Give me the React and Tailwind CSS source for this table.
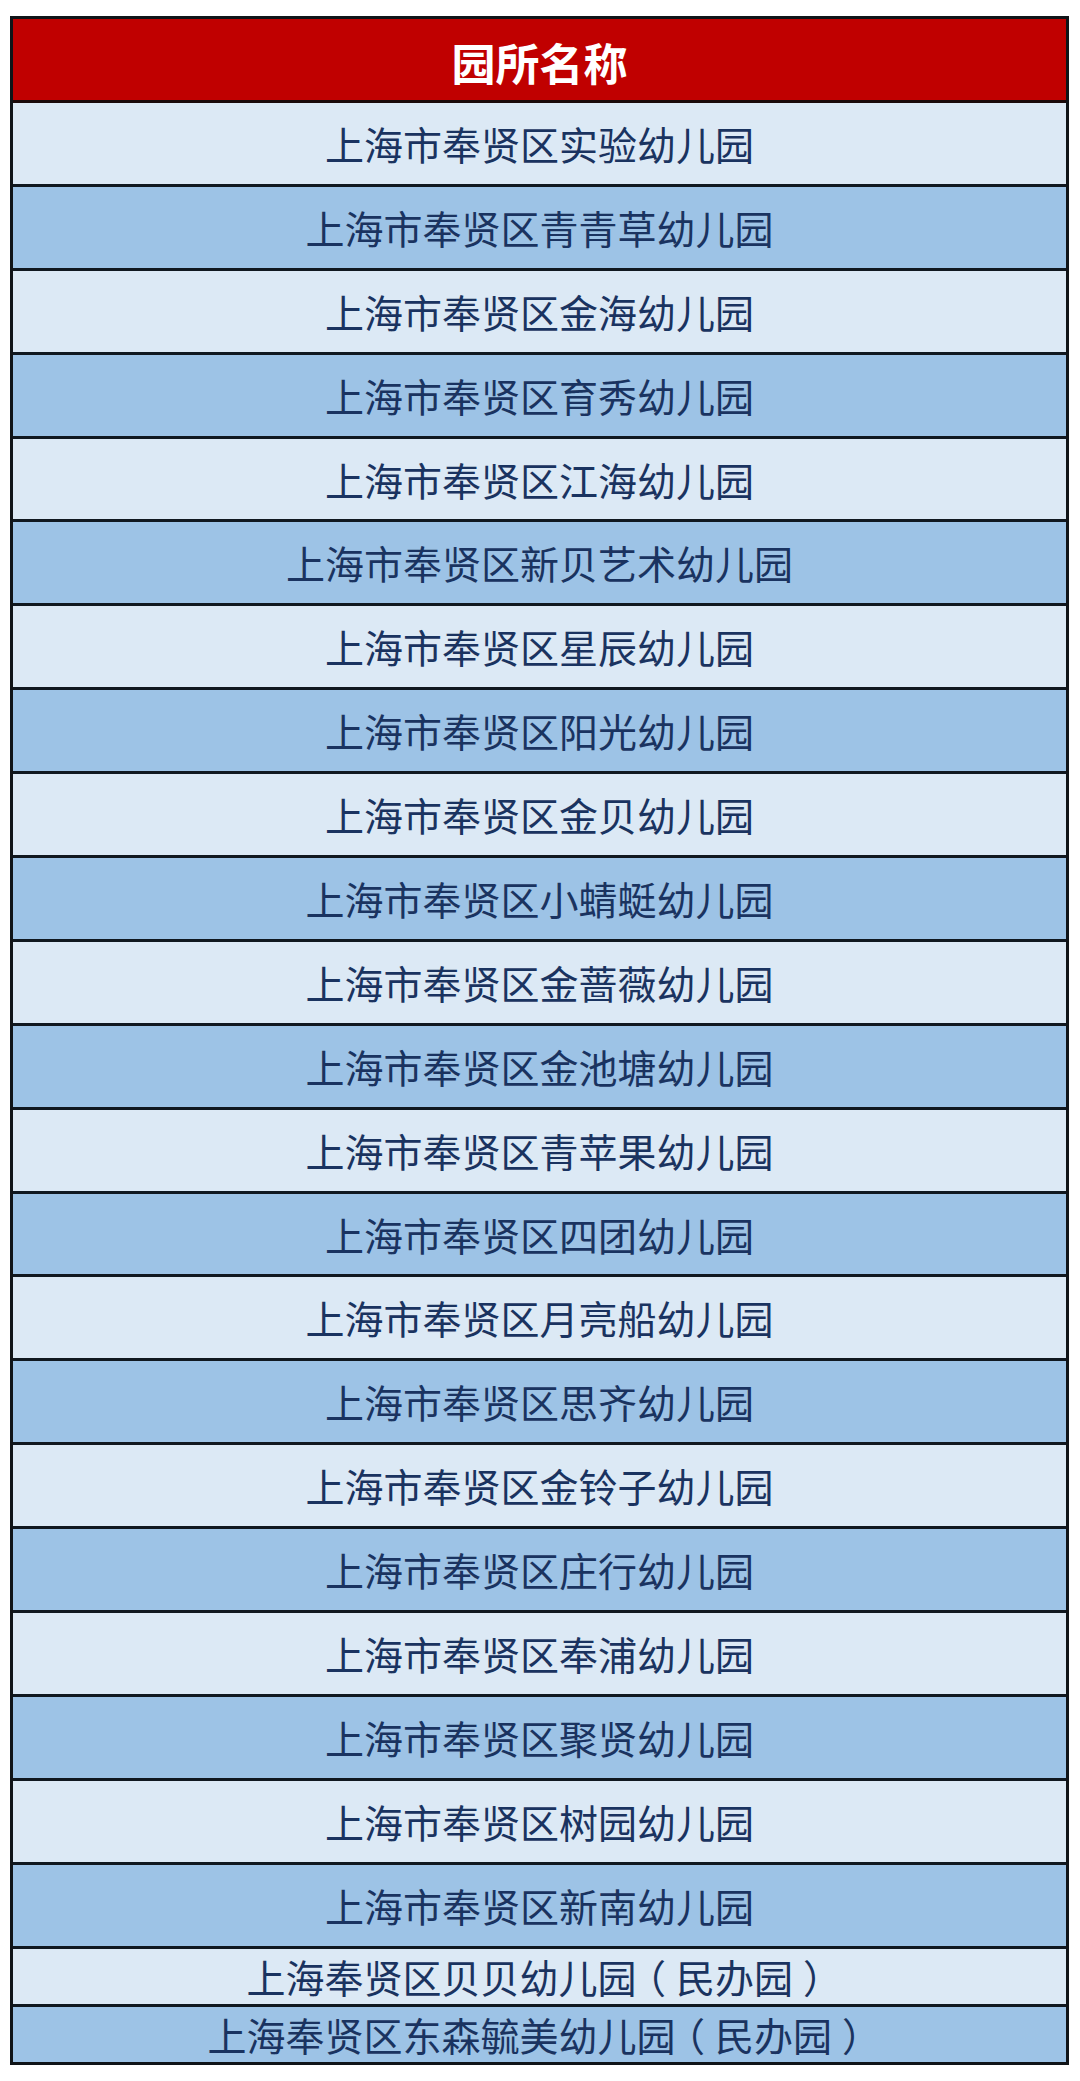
const names = [
  '上海市奉贤区实验幼儿园',
  '上海市奉贤区青青草幼儿园',
  '上海市奉贤区金海幼儿园',
  '上海市奉贤区育秀幼儿园',
  '上海市奉贤区江海幼儿园',
  '上海市奉贤区新贝艺术幼儿园',
  '上海市奉贤区星辰幼儿园',
  '上海市奉贤区阳光幼儿园',
  '上海市奉贤区金贝幼儿园',
  '上海市奉贤区小蜻蜓幼儿园',
  '上海市奉贤区金蔷薇幼儿园',
  '上海市奉贤区金池塘幼儿园',
  '上海市奉贤区青苹果幼儿园',
  '上海市奉贤区四团幼儿园',
  '上海市奉贤区月亮船幼儿园',
  '上海市奉贤区思齐幼儿园',
  '上海市奉贤区金铃子幼儿园',
  '上海市奉贤区庄行幼儿园',
  '上海市奉贤区奉浦幼儿园',
  '上海市奉贤区聚贤幼儿园',
  '上海市奉贤区树园幼儿园',
  '上海市奉贤区新南幼儿园',
]

const privateNames = ['上海奉贤区贝贝幼儿园', '上海奉贤区东森毓美幼儿园']

// half-width bracket glyph padded back out to a full cell, so it sits centred
const Bracket = ({ children }) => (
  <span className="inline-block px-[10px] [font-feature-settings:'halt']">{children}</span>
)

export default function App() {
  return (
    <div
      className="min-h-[2081px] w-[1080px] bg-white pt-[16px] pl-[10px]"
      style={{ fontFamily: '"Noto Sans CJK SC", "Noto Sans", sans-serif' }}
    >
      <div className="w-[1059px] border-[3px] border-[#101418] flex flex-col">
        <div className="h-[84px] flex items-center justify-center bg-[#c00000] border-b-[3px] border-[#1a0a0a] text-white text-[44px] font-bold leading-none pt-[4px]">
          园所名称
        </div>
        {names.map((name, i) => (
          <div
            key={name}
            className={`h-[83.9px] flex items-center justify-center border-b-[3px] border-[#101820] text-[39px] leading-none text-[#1a3360] ${
              i % 2 === 0 ? 'bg-[#dce9f5]' : 'bg-[#9dc3e6]'
            }`}
          >
            {name}
          </div>
        ))}
        {privateNames.map((name, i) => (
          <div
            key={name}
            className={`flex items-center justify-center text-[39px] leading-none text-[#1a3360] ${
              i === 0 ? 'h-[58px] bg-[#dce9f5] border-b-[3px] border-[#101820]' : 'h-[55px] bg-[#9dc3e6]'
            }`}
          >
            {name}
            <Bracket>（</Bracket>
            民办园
            <Bracket>）</Bracket>
          </div>
        ))}
      </div>
    </div>
  )
}
